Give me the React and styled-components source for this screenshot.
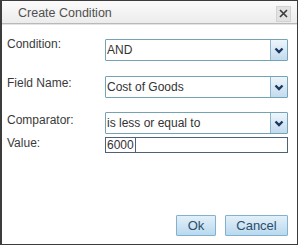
import React from "react";
import styled, { createGlobalStyle } from "styled-components";

const Global = createGlobalStyle`
  html, body { margin: 0; padding: 0; background: #ffffff; }
  body { font-family: "Liberation Sans", Arial, sans-serif; }
`;

const Dialog = styled.div`
  width: 298px;
  height: 245px;
  box-sizing: border-box;
  border: 1px solid #3c3c3c;
  border-left-width: 2px;
  background: #ffffff;
  display: flex;
  flex-direction: column;
`;

const TitleBar = styled.div`
  height: 23px;
  flex: none;
  box-sizing: border-box;
  display: flex;
  align-items: center;
  justify-content: space-between;
  padding: 0 6px 0 16px;
  background: linear-gradient(#fbfbfb, #ececec);
  border-bottom: 1px solid #b9b9b9;
  box-shadow: 0 1px 0 #e4e4e4;
`;

const Title = styled.div`
  font-size: 12.5px;
  color: #505050;
  line-height: 14px;
  padding-top: 2px;
`;

const CloseButton = styled.button`
  width: 15px;
  height: 16px;
  margin-top: 3px;
  padding: 0;
  box-sizing: border-box;
  border: 1px solid #d2d2d2;
  background: #e2e2e2;
  display: flex;
  align-items: center;
  justify-content: center;
`;

const Body = styled.div`
  flex: 1;
  display: flex;
  flex-direction: column;
  padding: 15px 9px 8px 5px;
`;

const Row = styled.div`
  display: flex;
  align-items: flex-start;
  margin-top: ${(p) => p.$gap || 0}px;
`;

const Label = styled.div`
  width: 98px;
  flex: none;
  font-size: 12px;
  line-height: 14px;
  color: #3a3a3a;
  margin-top: ${(p) => p.$offset || 0}px;
`;

const Select = styled.div`
  flex: 1;
  height: 22px;
  box-sizing: border-box;
  border: 1px solid #74a3b6;
  border-radius: 1px;
  display: flex;
  align-items: stretch;
  background: #ffffff;
`;

const SelectText = styled.div`
  flex: 1;
  font-size: 12px;
  color: #333333;
  line-height: 20px;
  padding-left: 1px;
`;

const ArrowBox = styled.div`
  width: 16px;
  flex: none;
  border-left: 1px solid #8fb6cc;
  background: linear-gradient(#eef5fb, #c2dbee);
  display: flex;
  align-items: center;
  justify-content: center;
`;

const Input = styled.div`
  flex: 1;
  height: 16px;
  box-sizing: border-box;
  border: 1px solid #4d6478;
  display: flex;
  align-items: stretch;
  background: #ffffff;
`;

const InputValue = styled.span`
  font-size: 12px;
  line-height: 14px;
  color: #333333;
  padding: 0 1px;
  border-right: 1px solid #4d6478;
`;

const Spacer = styled.div`
  flex: 1;
`;

const Footer = styled.div`
  display: flex;
  justify-content: flex-end;
  gap: 9px;
`;

const Button = styled.button`
  width: ${(p) => p.$w}px;
  height: 21px;
  box-sizing: border-box;
  padding: 0;
  border: 1px solid #82b2d0;
  border-radius: 1px;
  background: linear-gradient(#e3f0f9, #b9d9ee);
  color: #2d4d6c;
  font-family: "Liberation Sans", Arial, sans-serif;
  font-size: 13px;
  line-height: 19px;
`;

const Chevron = () => (
  <svg width="10" height="7" viewBox="0 0 10 7">
    <path d="M1.5 1.5 L5 5 L8.5 1.5" fill="none" stroke="#1a3860" strokeWidth="2.4" />
  </svg>
);

const CloseX = () => (
  <svg width="9" height="9" viewBox="0 0 9 9">
    <path d="M1 1 L8 8 M8 1 L1 8" stroke="#3a3a3a" strokeWidth="1.6" />
  </svg>
);

const SelectField = ({ value }) => (
  <Select>
    <SelectText>{value}</SelectText>
    <ArrowBox>
      <Chevron />
    </ArrowBox>
  </Select>
);

export default function App() {
  return (
    <>
      <Global />
      <Dialog>
        <TitleBar>
          <Title>Create Condition</Title>
          <CloseButton aria-label="close">
            <CloseX />
          </CloseButton>
        </TitleBar>
        <Body>
          <Row>
            <Label $offset={-2}>Condition:</Label>
            <SelectField value="AND" />
          </Row>
          <Row $gap={15}>
            <Label $offset={0}>Field Name:</Label>
            <SelectField value="Cost of Goods" />
          </Row>
          <Row $gap={14}>
            <Label $offset={1}>Comparator:</Label>
            <SelectField value="is less or equal to" />
          </Row>
          <Row $gap={3}>
            <Label $offset={-1}>Value:</Label>
            <Input>
              <InputValue>6000</InputValue>
            </Input>
          </Row>
          <Spacer />
          <Footer>
            <Button $w={40}>Ok</Button>
            <Button $w={63}>Cancel</Button>
          </Footer>
        </Body>
      </Dialog>
    </>
  );
}
